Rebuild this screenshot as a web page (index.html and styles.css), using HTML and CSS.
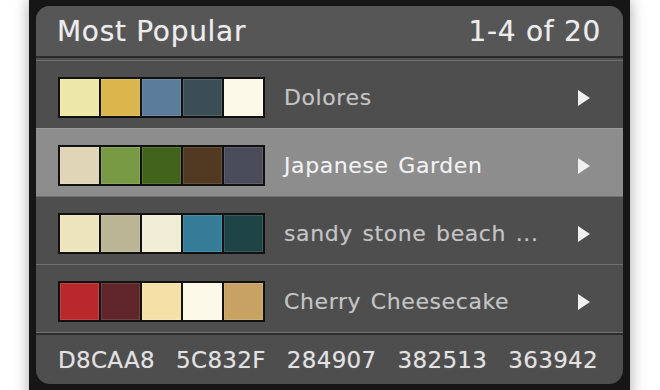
FILE: index.html
```html
<!DOCTYPE html>
<html lang="en">

<head>
    <meta charset="UTF-8">
    <title>Most Popular Palettes</title>
    <link rel="stylesheet" href="styles.css">
</head>

<body>
    <div class="window">
        <div class="panel">
            <div class="panel-header">
                <span class="title">Most Popular</span>
                <span class="count">1-4 of 20</span>
            </div>

            <div class="palette-list">
                <div class="palette-row">
                    <div class="swatches">
                        <span class="swatch c-ece5a5"></span>
                        <span class="swatch c-d9b54a"></span>
                        <span class="swatch c-5a7b98"></span>
                        <span class="swatch c-3a4e55"></span>
                        <span class="swatch c-fdf8e6"></span>
                    </div>
                    <span class="palette-name">Dolores</span>
                    <span class="arrow"></span>
                </div>

                <div class="palette-row selected">
                    <div class="swatches">
                        <span class="swatch c-d8caa8"></span>
                        <span class="swatch c-5c832f"></span>
                        <span class="swatch c-284907"></span>
                        <span class="swatch c-382513"></span>
                        <span class="swatch c-363942"></span>
                    </div>
                    <span class="palette-name">Japanese Garden</span>
                    <span class="arrow"></span>
                </div>

                <div class="palette-row">
                    <div class="swatches">
                        <span class="swatch c-ede6bc"></span>
                        <span class="swatch c-bab493"></span>
                        <span class="swatch c-f3eed4"></span>
                        <span class="swatch c-2f7a96"></span>
                        <span class="swatch c-1d4043"></span>
                    </div>
                    <span class="palette-name">sandy stone beach ...</span>
                    <span class="arrow"></span>
                </div>

                <div class="palette-row">
                    <div class="swatches">
                        <span class="swatch c-b3282d"></span>
                        <span class="swatch c-5e2528"></span>
                        <span class="swatch c-f5e0a4"></span>
                        <span class="swatch c-fdf8e6"></span>
                        <span class="swatch c-c49f5e"></span>
                    </div>
                    <span class="palette-name">Cherry Cheesecake</span>
                    <span class="arrow"></span>
                </div>
            </div>

            <div class="panel-footer">
                <span>D8CAA8</span>
                <span>5C832F</span>
                <span>284907</span>
                <span>382513</span>
                <span>363942</span>
            </div>
        </div>
    </div>
</body>

</html>
```

FILE: styles.css
```css
body {
    margin: 0;
    background-color: #fff;
    font-family: "DejaVu Sans", "Liberation Sans", sans-serif;
    overflow: hidden;
}

.window {
    margin-left: 29px;
    width: 601px;
    height: 400px;
    box-sizing: border-box;
    padding: 6px 7px;
    background-color: #161616;
    box-shadow: 0 0 14px rgba(0, 0, 0, 0.35);
}

.panel {
    height: 378px;
    border-radius: 14px;
    background-color: #4e4e4e;
    overflow: hidden;
    display: flex;
    flex-direction: column;
}

.panel-header {
    height: 50px;
    padding: 0 22px 0 21px;
    display: flex;
    align-items: center;
    justify-content: space-between;
    background-color: #565656;
    border-bottom: 2px solid #2b2b2b;
    color: #ececec;
    font-size: 28px;
    letter-spacing: 0.7px;
    text-shadow: 0 0 1px rgba(255, 255, 255, 0.4);
}

.palette-list {
    padding-top: 2px;
}

.palette-row {
    height: 67px;
    border-top: 1px solid #6f6f6f;
    padding-left: 22px;
    padding-right: 33px;
    display: flex;
    align-items: flex-start;
}

.palette-row.selected {
    background-color: #8d8d8d;
    border-top-color: #9a9a9a;
}

.swatches {
    margin-top: 16px;
    display: flex;
    gap: 2px;
    padding: 2px;
    background-color: #111;
}

.swatch {
    width: 39px;
    height: 37px;
    box-shadow: inset 0 0 0 1px rgba(255, 255, 255, 0.12);
}

.palette-name {
    margin-top: 23px;
    margin-left: 19px;
    flex: 1;
    color: #c4c4c4;
    font-size: 22px;
    letter-spacing: 0.6px;
    word-spacing: 2px;
    line-height: 28px;
    text-shadow: 0 0 1px rgba(255, 255, 255, 0.25);
}

.selected .palette-name {
    color: #f2f2f2;
}

.arrow {
    margin-top: 29px;
    width: 0;
    height: 0;
    border-top: 8px solid transparent;
    border-bottom: 8px solid transparent;
    border-left: 12px solid #f0f0f0;
}

.panel-footer {
    flex: 1;
    border-top: 1px solid #6f6f6f;
    box-shadow: inset 0 2px 0 #2d2d2d;
    padding: 2px 25px 0 22px;
    display: flex;
    align-items: center;
    justify-content: space-between;
    color: #e2e2e2;
    font-size: 23px;
    letter-spacing: 0.3px;
    text-shadow: 0 0 1px rgba(255, 255, 255, 0.3);
}

/* swatch colours */
.c-ece5a5 { background-color: #ede7a8; }
.c-d9b54a { background-color: #dbb64c; }
.c-5a7b98 { background-color: #5b7c9a; }
.c-3a4e55 { background-color: #3b4e56; }
.c-fdf8e6 { background-color: #fdf9e8; }
.c-d8caa8 { background-color: #e0d5b6; }
.c-5c832f { background-color: #789a44; }
.c-284907 { background-color: #41631b; }
.c-382513 { background-color: #523a22; }
.c-363942 { background-color: #4a4c5a; }
.c-ede6bc { background-color: #ece4bc; }
.c-bab493 { background-color: #bbb596; }
.c-f3eed4 { background-color: #f2eed6; }
.c-2f7a96 { background-color: #357c99; }
.c-1d4043 { background-color: #1f4446; }
.c-b3282d { background-color: #b8282d; }
.c-5e2528 { background-color: #5f2528; }
.c-f5e0a4 { background-color: #f5e1a7; }
.c-c49f5e { background-color: #c8a263; }
```
